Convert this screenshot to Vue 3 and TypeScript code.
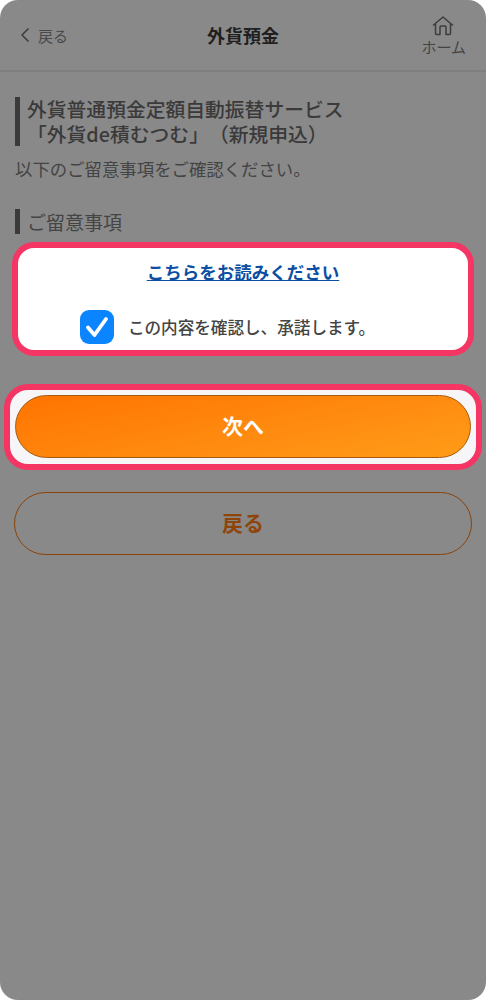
<script setup lang="ts">
const title: string = '外貨預金'
</script>

<template>
  <div class="screen">
    <header class="head">
      <div class="back">
        <svg class="chev" width="10" height="16" viewBox="0 0 10 16"><path d="M8.5 1.5 2 8l6.500 6.500" fill="none" stroke="#3c3c3c" stroke-width="1.500"/></svg>
        <span>戻る</span>
      </div>
      <div class="title">{{ title }}</div>
      <div class="home">
        <svg width="22" height="20" viewBox="0 0 22 20"><path d="M1 9.500 11 1l10 8.500M3.500 8v9.200q0 1.300 1.300 1.300h3.200V11q0-1 1-1h4q1 0 1 1v7.500h3.200q1.300 0 1.300-1.300V8" fill="none" stroke="#3c3c3c" stroke-width="1.500" stroke-linejoin="round"/></svg>
        <span>ホーム</span>
      </div>
    </header>
    <main class="body">
      <h1 class="h1"><span class="h1-text">外貨普通預金定額自動振替サービス<br>「外貨de積むつむ」（新規申込）</span></h1>
      <p class="lead">以下のご留意事項をご確認ください。</p>
      <h2 class="h2">ご留意事項</h2>
      <section class="notice">
        <a class="link">こちらをお読みください</a>
        <label class="check">
          <span class="box">
            <svg width="26" height="24" viewBox="0 0 26 24"><path d="M4 12.500 10.500 20 22 4" fill="none" stroke="#fff" stroke-width="3.800" stroke-linecap="round" stroke-linejoin="round"/></svg>
          </span>
          <span>この内容を確認し、承諾します。</span>
        </label>
      </section>
      <div class="next-wrap"><button class="btn next">次へ</button></div>
      <button class="btn prev">戻る</button>
    </main>
  </div>
</template>

<style>
html, body { margin: 0; background: #fff; }
</style>

<style scoped>
.screen {
  width: 486px;
  height: 1000px;
  box-sizing: border-box;
  background: #898989;
  border-radius: 18px;
  overflow: hidden;
  font-family: "Noto Sans CJK JP", "Liberation Sans", sans-serif;
  color: #3c3c3c;
  text-spacing-trim: space-all;
}
.head {
  height: 72px;
  box-sizing: border-box;
  border-bottom: 2px solid #7f7f7f;
  display: grid;
  grid-template-columns: 1fr auto 1fr;
  align-items: center;
  padding: 0 20px;
}
.back { display: flex; align-items: center; gap: 8px; font-size: 15px; color: #4a4a4a; }
.chev { display: block; }
.title { font-size: 18px; font-weight: 700; color: #1f1f1f; line-height: 24px; }
.home {
  justify-self: end;
  display: flex;
  flex-direction: column;
  align-items: center;
  font-size: 15px;
  line-height: 16px;
  color: #444;
  gap: 3px;
  margin-top: 1px;
}
.home svg { display: block; margin-right: 2px; }
.body { padding: 25px 0 0; display: flex; flex-direction: column; }
.h1 {
  margin: 0 0 0 15px;
  padding-left: 7px;
  height: 49px;
  border-left: 5px solid #3a3a3a;
  font-size: 19.800px;
  line-height: 25px;
  font-weight: 500;
  color: #3a3a3a;
  white-space: nowrap;
}
.h1-text { display: block; margin-top: -1px; }
.lead { margin: 10px 0 0 15px; font-size: 17.400px; line-height: 25px; color: #444; }
.h2 {
  margin: 28px 0 0 15px;
  padding-left: 7px;
  border-left: 5px solid #3a3a3a;
  font-size: 19px;
  line-height: 25px;
  font-weight: 400;
  color: #444;
}
.notice {
  margin: 8px 12px 0;
  height: 114px;
  box-sizing: border-box;
  border: 6px solid #f53563;
  border-radius: 22px;
  background: #fff;
  display: flex;
  flex-direction: column;
  align-items: center;
}
.link {
  margin-top: 11px;
  font-size: 17.500px;
  line-height: 26px;
  font-weight: 700;
  color: #0b4ea2;
  text-decoration: underline;
}
.check {
  margin-top: 25px;
  padding-right: 31px;
  display: flex;
  align-items: center;
  gap: 14px;
  font-size: 16.600px;
  font-weight: 500;
  color: #444;
}
.box {
  width: 34px;
  height: 34px;
  border-radius: 9px;
  background: #0a84ff;
  display: flex;
  align-items: center;
  justify-content: center;
}
.next-wrap {
  margin: 28px 4px 0;
  height: 86px;
  box-sizing: border-box;
  border: 6px solid #f53563;
  border-radius: 24px;
  background: #f6f6f9;
  padding: 5px;
}
.btn {
  display: block;
  box-sizing: border-box;
  border-radius: 32px;
  font-family: inherit;
  font-size: 21px;
  font-weight: 700;
  padding: 0 0 4px;
}
.next {
  width: 100%;
  height: 63px;
  color: #fff;
  border: 1px solid #a85a0c;
  background: linear-gradient(168deg, #ff7400 0%, #ff8a10 55%, #ff9c17 100%);
}
.prev {
  margin: 22px 14px 0;
  width: 458px;
  height: 63px;
  background: transparent;
  border: 1px solid #8a4208;
  color: #8f4509;
}
</style>
